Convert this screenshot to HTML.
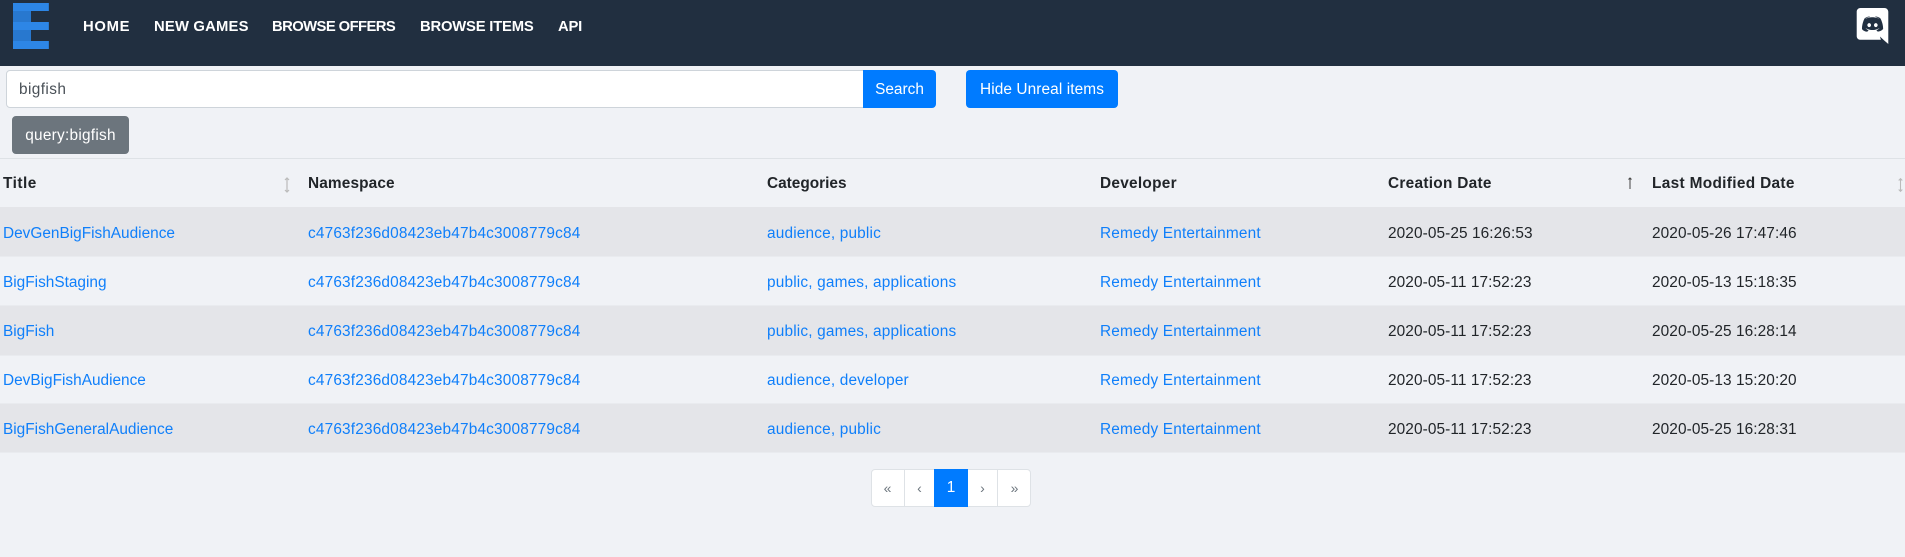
<!DOCTYPE html>
<html><head><meta charset="utf-8"><style>
*{box-sizing:border-box}
html,body{margin:0;padding:0}
body{width:1905px;height:557px;background:#f0f2f6;overflow:hidden;position:relative;font:15.4px/24px "Liberation Sans",sans-serif;color:#212529}
.a{position:absolute;white-space:nowrap}
#nav{left:0;top:0;width:1905px;height:66px;background:#212f40}
.n{top:15px;color:#fff;font-weight:bold;font-size:14.8px;letter-spacing:-.2px}
.btn{background:#007bff;color:#fff;text-align:center;top:70px;height:38px;line-height:40px;border-radius:4px}
#input{left:6px;top:70px;width:858px;height:38px;background:#fff;border:1px solid #ced4da;border-radius:4px 0 0 4px;padding:0 12px;line-height:38px;color:#495057;letter-spacing:.4px}
#badge{left:12px;top:116px;width:117px;height:38px;line-height:40px;background:#6c757d;color:#fff;border-radius:4px;text-align:center;letter-spacing:.25px}
#hr{left:0;top:158px;width:1905px;height:1px;background:#dee2e6}
.row{left:0;width:1905px;border-bottom:1px solid #e9ebef}
.s{background:#e4e5e9}
.c{line-height:24px}
.l{color:#0f7ffa}
.x{letter-spacing:.17px}
.d{letter-spacing:.09px}
.h{top:172px;font-weight:bold}
#pg{left:871px;top:469px;width:160px;height:38px;background:#fff;border:1px solid #dee2e6;border-radius:4px}
.p{top:469px;height:38px;line-height:38px;text-align:center;color:#6c757d;font-size:14px}
.sep{top:470px;width:1px;height:36px;background:#dee2e6}
</style></head><body>
<div class="a" id="nav"></div>
<svg class="a" style="left:13px;top:3px" width="36" height="46" viewBox="0 0 36 46"><rect x="0" y="0" width="36" height="8" fill="#2d86e6"/><rect x="0" y="8" width="18" height="11" fill="#2878cf"/><rect x="0" y="19" width="36" height="8" fill="#2d86e6"/><rect x="0" y="27" width="18" height="11" fill="#2878cf"/><rect x="0" y="38" width="36" height="8" fill="#2d86e6"/><rect x="35" y="0" width="1" height="8" fill="#2878cf"/><rect x="35" y="19" width="1" height="8" fill="#2878cf"/><rect x="35" y="38" width="1" height="8" fill="#2878cf"/></svg>
<div class="a n" style="left:83px;letter-spacing:.7px">HOME</div>
<div class="a n" style="left:154px;letter-spacing:.2px">NEW GAMES</div>
<div class="a n" style="left:272px;letter-spacing:-.58px">BROWSE OFFERS</div>
<div class="a n" style="left:420px">BROWSE ITEMS</div>
<div class="a n" style="left:558px">API</div>
<svg class="a" style="left:1855px;top:8px" width="35" height="36" viewBox="0 0 24 24" preserveAspectRatio="none"><path fill="#fff" fill-rule="evenodd" d="M20.222 0c1.406 0 2.54 1.137 2.607 2.475V24l-2.677-2.273-1.47-1.338-1.604-1.398.67 2.205H3.71c-1.402 0-2.54-1.065-2.54-2.476V2.48C1.17 1.142 2.31.003 3.715.003h16.5L20.222 0zm-6.118 5.683h-.03l-.202.2c2.073.6 3.076 1.537 3.076 1.537-1.336-.668-2.54-1.002-3.744-1.137-.87-.135-1.74-.064-2.475 0h-.2c-.47 0-1.47.2-2.81.735-.467.203-.735.336-.735.336s1.002-1.002 3.21-1.537l-.135-.135s-1.672-.064-3.477 1.27c0 0-1.805 3.144-1.805 7.02 0 0 1 1.74 3.743 1.806 0 0 .4-.533.805-1.002-1.54-.468-2.14-1.404-2.14-1.404s.134.066.335.2h.06c.03 0 .044.015.06.03v.006c.016.016.03.03.06.03.33.136.66.27.93.4.466.202 1.065.403 1.8.536.93.135 1.996.2 3.21 0 .6-.135 1.2-.267 1.8-.535.39-.2.87-.4 1.397-.737 0 0-.6.936-2.205 1.404.33.466.795 1 .795 1 2.744-.06 3.81-1.8 3.87-1.726 0-3.87-1.815-7.02-1.815-7.02-1.635-1.214-3.165-1.26-3.435-1.26l.056-.02zm.168 4.413c.703 0 1.27.6 1.27 1.335 0 .74-.57 1.34-1.27 1.34-.7 0-1.27-.6-1.27-1.334.002-.74.573-1.338 1.27-1.338zm-4.543 0c.7 0 1.266.6 1.266 1.335 0 .74-.57 1.34-1.27 1.34-.7 0-1.27-.6-1.27-1.334 0-.74.57-1.338 1.27-1.338z"/></svg>
<div class="a" id="input">bigfish</div>
<div class="a btn" style="left:863px;width:73px;border-radius:0 4px 4px 0">Search</div>
<div class="a btn" style="left:966px;width:152px;letter-spacing:.1px">Hide Unreal items</div>
<div class="a" id="badge">query:bigfish</div>
<div class="a" id="hr"></div>

<div class="a c h" style="left:3px;letter-spacing:.5px">Title</div>
<div class="a c h" style="left:308px;letter-spacing:.13px">Namespace</div>
<div class="a c h" style="left:767px">Categories</div>
<div class="a c h" style="left:1100px;letter-spacing:.27px">Developer</div>
<div class="a c h" style="left:1388px;letter-spacing:.28px">Creation Date</div>
<div class="a c h" style="left:1652px;letter-spacing:.33px">Last Modified Date</div>
<svg class="a" style="left:282px;top:177px" width="10" height="16" viewBox="0 0 10 16"><path d="M5 1v14M3 3l2-2 2 2M3 13l2 2 2-2" stroke="#bbb" stroke-width="1.2" fill="none"/></svg>
<svg class="a" style="left:1625px;top:176px" width="10" height="16" viewBox="0 0 10 16"><path d="M5 2v11M3.5 3.5l1.5-1.5 1.5 1.5" stroke="#444" stroke-width="1" fill="none"/></svg>
<svg class="a" style="left:1896px;top:177px" width="9" height="16" viewBox="0 0 10 16"><path d="M5 1v14M3 3l2-2 2 2M3 13l2 2 2-2" stroke="#bbb" stroke-width="1.2" fill="none"/></svg>

<div class="a row s" style="top:207px;height:50px"></div>
<div class="a row" style="top:257px;height:49px"></div>
<div class="a row s" style="top:306px;height:50px"></div>
<div class="a row" style="top:356px;height:48px"></div>
<div class="a row s" style="top:404px;height:49px"></div>

<div class="a c l" style="left:3px;top:222px">DevGenBigFishAudience</div>
<div class="a c l x" style="left:308px;top:222px">c4763f236d08423eb47b4c3008779c84</div>
<div class="a c l x" style="left:767px;top:222px">audience, public</div>
<div class="a c l x" style="left:1100px;top:222px">Remedy Entertainment</div>
<div class="a c d" style="left:1388px;top:222px">2020-05-25 16:26:53</div>
<div class="a c d" style="left:1652px;top:222px">2020-05-26 17:47:46</div>

<div class="a c l" style="left:3px;top:271px">BigFishStaging</div>
<div class="a c l x" style="left:308px;top:271px">c4763f236d08423eb47b4c3008779c84</div>
<div class="a c l x" style="left:767px;top:271px">public, games, applications</div>
<div class="a c l x" style="left:1100px;top:271px">Remedy Entertainment</div>
<div class="a c d" style="left:1388px;top:271px">2020-05-11 17:52:23</div>
<div class="a c d" style="left:1652px;top:271px">2020-05-13 15:18:35</div>

<div class="a c l" style="left:3px;top:320px">BigFish</div>
<div class="a c l x" style="left:308px;top:320px">c4763f236d08423eb47b4c3008779c84</div>
<div class="a c l x" style="left:767px;top:320px">public, games, applications</div>
<div class="a c l x" style="left:1100px;top:320px">Remedy Entertainment</div>
<div class="a c d" style="left:1388px;top:320px">2020-05-11 17:52:23</div>
<div class="a c d" style="left:1652px;top:320px">2020-05-25 16:28:14</div>

<div class="a c l" style="left:3px;top:369px">DevBigFishAudience</div>
<div class="a c l x" style="left:308px;top:369px">c4763f236d08423eb47b4c3008779c84</div>
<div class="a c l x" style="left:767px;top:369px">audience, developer</div>
<div class="a c l x" style="left:1100px;top:369px">Remedy Entertainment</div>
<div class="a c d" style="left:1388px;top:369px">2020-05-11 17:52:23</div>
<div class="a c d" style="left:1652px;top:369px">2020-05-13 15:20:20</div>

<div class="a c l" style="left:3px;top:418px">BigFishGeneralAudience</div>
<div class="a c l x" style="left:308px;top:418px">c4763f236d08423eb47b4c3008779c84</div>
<div class="a c l x" style="left:767px;top:418px">audience, public</div>
<div class="a c l x" style="left:1100px;top:418px">Remedy Entertainment</div>
<div class="a c d" style="left:1388px;top:418px">2020-05-11 17:52:23</div>
<div class="a c d" style="left:1652px;top:418px">2020-05-25 16:28:31</div>

<div class="a" id="pg"></div>
<div class="a sep" style="left:904px"></div>
<div class="a sep" style="left:997px"></div>
<div class="a p" style="left:872px;width:31px">«</div>
<div class="a p" style="left:905px;width:29px">‹</div>
<div class="a p" style="left:934px;width:34px;background:#007bff;color:#fff;font-size:15.4px">1</div>
<div class="a p" style="left:968px;width:29px">›</div>
<div class="a p" style="left:999px;width:31px">»</div>
</body></html>
